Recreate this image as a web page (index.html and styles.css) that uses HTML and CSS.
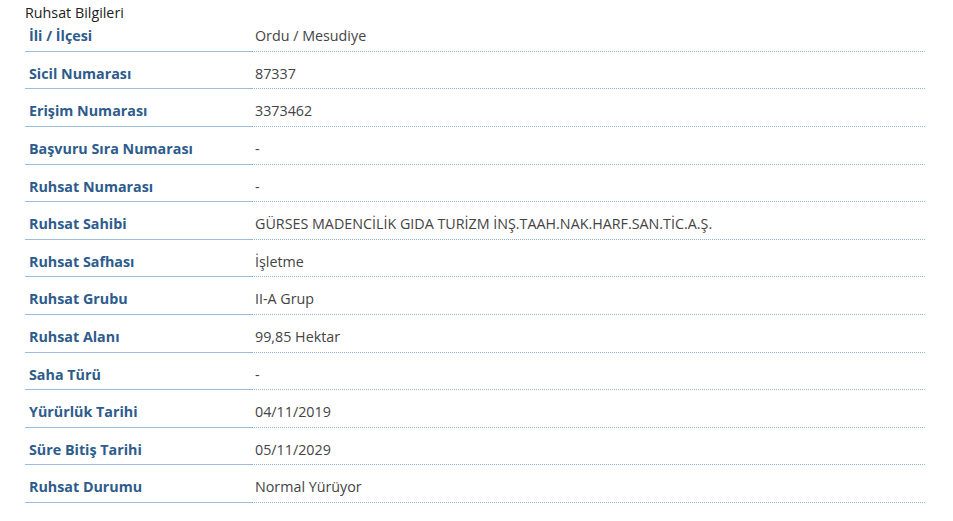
FILE: index.html
```html
<!DOCTYPE html>
<html lang="tr">
<head>
    <meta charset="UTF-8">
    <meta name="viewport" content="width=device-width, initial-scale=1.0">
    <title>Ruhsat Bilgileri</title>
    <link rel="stylesheet" href="styles.css">
</head>
<body>
    <div class="ruhsat">
        <div class="ruhsat-title">Ruhsat Bilgileri</div>

        <div class="row">
            <div class="label">İli / İlçesi</div>
            <div class="value">Ordu / Mesudiye</div>
        </div>
        <div class="row">
            <div class="label">Sicil Numarası</div>
            <div class="value">87337</div>
        </div>
        <div class="row">
            <div class="label">Erişim Numarası</div>
            <div class="value">3373462</div>
        </div>
        <div class="row">
            <div class="label">Başvuru Sıra Numarası</div>
            <div class="value">-</div>
        </div>
        <div class="row">
            <div class="label">Ruhsat Numarası</div>
            <div class="value">-</div>
        </div>
        <div class="row">
            <div class="label">Ruhsat Sahibi</div>
            <div class="value">GÜRSES MADENCİLİK GIDA TURİZM İNŞ.TAAH.NAK.HARF.SAN.TİC.A.Ş.</div>
        </div>
        <div class="row">
            <div class="label">Ruhsat Safhası</div>
            <div class="value">İşletme</div>
        </div>
        <div class="row">
            <div class="label">Ruhsat Grubu</div>
            <div class="value">II-A Grup</div>
        </div>
        <div class="row">
            <div class="label">Ruhsat Alanı</div>
            <div class="value">99,85 Hektar</div>
        </div>
        <div class="row">
            <div class="label">Saha Türü</div>
            <div class="value">-</div>
        </div>
        <div class="row">
            <div class="label">Yürürlük Tarihi</div>
            <div class="value">04/11/2019</div>
        </div>
        <div class="row">
            <div class="label">Süre Bitiş Tarihi</div>
            <div class="value">05/11/2029</div>
        </div>
        <div class="row">
            <div class="label">Ruhsat Durumu</div>
            <div class="value">Normal Yürüyor</div>
        </div>
    </div>
</body>
</html>
```

FILE: styles.css
```css
body {
    margin: 0;
    padding: 0;
    background-color: #ffffff;
    font-family: 'Open Sans', 'Liberation Sans', sans-serif;
    font-size: 14.3px;
    line-height: 20px;
    color: #333;
}
.ruhsat {
    width: 900px;
    margin-left: 25px;
    padding-top: 3px;
}
.ruhsat-title {
    color: #222;
}
.row {
    display: grid;
    grid-template-columns: 226px 1fr;
}
.label, .value {
    padding: 12px 4px 4.6px 4px;
}
/* first row sits right under the title */
.ruhsat-title + .row .label,
.ruhsat-title + .row .value {
    padding-top: 3.3px;
}
.label {
    font-weight: bold;
    color: #2d5c8c;
    border-bottom: 1px solid #9dbcda;
}
.value {
    color: #444;
    border-bottom: 1px dotted #8fb4d6;
}
```
